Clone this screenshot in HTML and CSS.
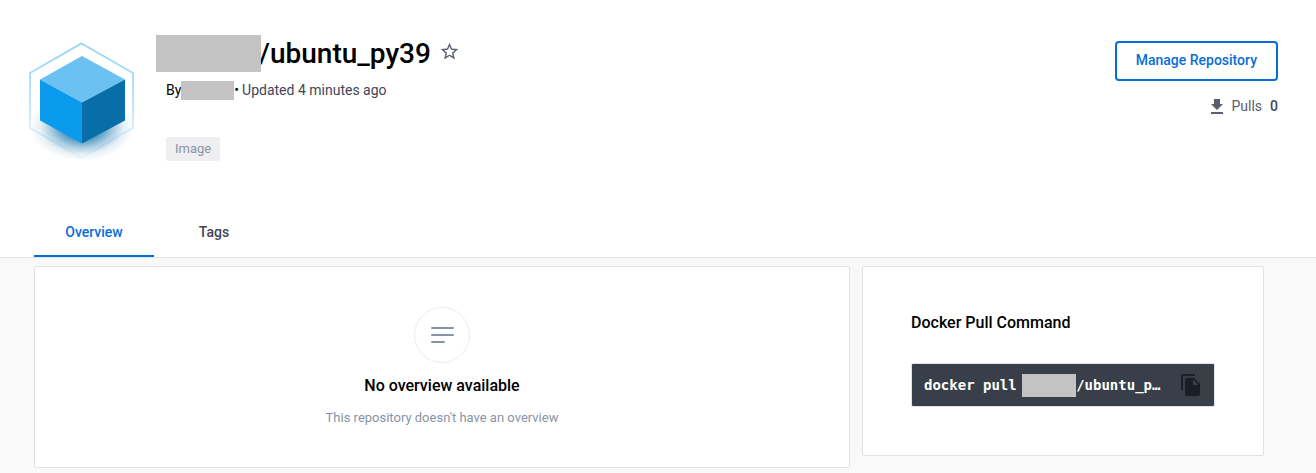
FILE: index.html
```
<!DOCTYPE html>
<html lang="en">
<head>
  <meta charset="UTF-8" />
  <meta name="viewport" content="width=device-width, initial-scale=1.0"/>
  <title>ubuntu_py39 - Repository</title>
  <link rel="stylesheet" href="styles.css">
</head>
<body>
  <header class="repo-header">
    <div class="repo-top">
      <svg class="repo-logo" viewBox="0 0 106 120" aria-hidden="true">
        <defs>
          <linearGradient id="hexStroke" x1="0" y1="0" x2="0" y2="1">
            <stop offset="0" stop-color="#98d5fa"/>
            <stop offset="0.4" stop-color="#b5e0fb"/>
            <stop offset="1" stop-color="#f4fbff"/>
          </linearGradient>
          <radialGradient id="cubeShadow">
            <stop offset="0" stop-color="#086ea8"/>
            <stop offset="0.35" stop-color="#086ea8" stop-opacity="0.75"/>
            <stop offset="0.6" stop-color="#086ea8" stop-opacity="0.35"/>
            <stop offset="0.8" stop-color="#086ea8" stop-opacity="0.1"/>
            <stop offset="1" stop-color="#086ea8" stop-opacity="0"/>
          </radialGradient>
        </defs>
        <path d="M53.500 2.500L105 32V87L53.500 116.500L2 87V32z" fill="none" stroke="url(#hexStroke)" stroke-width="2"/>
        <ellipse cx="54" cy="86" rx="52" ry="34" fill="url(#cubeShadow)"/>
        <path d="M54 15L97 38.500L54 61.500L12 38.500z" fill="#6bc1f2"/>
        <path d="M12 38.500L54 61.500V102.500L12 79.500z" fill="#0a9bec"/>
        <path d="M97 38.500L54 61.500V102.500L97 79.500z" fill="#086ea8"/>
      </svg>

      <div class="repo-info">
        <div class="title-row">
          <span class="redacted redacted-title"></span>
          <h1>/ubuntu_py39</h1>
          <button type="button" class="icon-btn star-btn" aria-label="Star">
            <svg viewBox="0 0 24 24" width="21" height="21"><path fill="#58606e" d="M22 9.240l-7.190-.620L12 2 9.190 8.630 2 9.240l5.460 4.730L5.820 21 12 17.270 18.180 21l-1.630-7.030L22 9.240zM12 15.400l-3.760 2.270 1-4.280-3.320-2.880 4.380-.380L12 6.100l1.710 4.040 4.380.380-3.320 2.880 1 4.280L12 15.400z"/></svg>
          </button>
        </div>
        <p class="meta">
          <span class="by">By</span><span class="redacted redacted-user"></span><span class="by">•</span>
          <span class="updated">Updated 4 minutes ago</span>
        </p>
        <span class="tag">Image</span>
      </div>

      <div class="repo-actions">
        <button type="button" class="manage-btn">Manage Repository</button>
        <div class="pulls">
          <svg viewBox="0 0 12 15" width="12" height="15" aria-hidden="true"><path fill="#58606e" d="M3 0h6v5h3L6 11 0 5h3zM0 13h12v2H0z"/></svg>
          <span>Pulls</span>
          <strong>0</strong>
        </div>
      </div>
    </div>

    <nav class="tabs">
      <a href="#overview" class="tab active">Overview</a>
      <a href="#tags" class="tab">Tags</a>
    </nav>
  </header>

  <main class="content">
    <section class="card overview" id="overview">
      <div class="empty-icon">
        <svg viewBox="0 0 24 18" width="24" height="18" aria-hidden="true"><path stroke="#8993a7" stroke-width="2" stroke-linecap="round" d="M2 2h21M2 9h21M2 16h12"/></svg>
      </div>
      <h2>No overview available</h2>
      <p>This repository doesn't have an overview</p>
    </section>

    <aside class="card pull-card">
      <h2>Docker Pull Command</h2>
      <div class="command">
        <code>docker pull <span class="redacted redacted-code"></span>/ubuntu_p…</code>
        <button type="button" class="icon-btn" aria-label="Copy">
          <svg viewBox="0 0 19 22" width="19" height="22"><path fill="#1b1f25" d="M14 0v2H2v14H0V2Q0 0 2 0zM6 4h7l6 6v10q0 2-2 2H6q-2 0-2-2V6q0-2 2-2zM12 5.500V11h5.500z"/></svg>
        </button>
      </div>
    </aside>
  </main>
</body>
</html>
```

FILE: styles.css
```
* {
  box-sizing: border-box;
  margin: 0;
  padding: 0;
}

body {
  background-color: #f9f9f9;
  color: #000000;
  font-family: Roboto, sans-serif;
  font-size: 14px;
  line-height: 20px;
}

.repo-header {
  background: #ffffff;
  border-bottom: 1px solid #e1e2e6;
}

.repo-top {
  display: flex;
  align-items: flex-start;
  min-height: 208px;
  padding: 35px 38px 0 28px;
}

.repo-logo {
  width: 106px;
  height: 120px;
  margin-top: 6px;
  margin-right: 22px;
  flex-shrink: 0;
}

.repo-info {
  flex: 1;
}

.redacted {
  display: inline-block;
  background: #c3c3c3;
  flex-shrink: 0;
}

.title-row {
  display: flex;
  align-items: center;
}

/* covers the start of the slash */
.redacted-title {
  position: relative;
  width: 105px;
  height: 37px;
  margin-right: -2px;
}

h1 {
  font-size: 28px;
  line-height: 36px;
  font-weight: 500;
}

.icon-btn {
  display: flex;
  border: none;
  background: none;
  cursor: pointer;
}

.star-btn {
  margin-left: 8px;
  margin-bottom: 4px;
}

.meta {
  display: flex;
  align-items: center;
  margin: 8px 0 0 10px;
}

.redacted-user {
  width: 53px;
  height: 19px;
}

.updated {
  margin-left: 3px;
  color: #445;
}

.tag {
  display: inline-block;
  margin: 37px 0 0 10px;
  padding: 0 9px;
  border-radius: 2px;
  background: #efeff2;
  color: #8993a7;
  font-size: 13px;
  line-height: 24px;
}

.repo-actions {
  display: flex;
  flex-direction: column;
  align-items: flex-end;
  gap: 15px;
  padding-top: 6px;
}

.manage-btn {
  height: 40px;
  padding: 0 19px 2px;
  border: 2px solid #086dd7;
  border-radius: 4px;
  background: #ffffff;
  color: #086dd7;
  font-family: inherit;
  font-size: 14px;
  font-weight: 500;
  cursor: pointer;
}

.pulls {
  display: flex;
  align-items: center;
  gap: 8px;
  color: #58606e;
}

.pulls strong {
  color: #445;
  font-weight: 500;
}

.tabs {
  display: flex;
  padding-left: 34px;
}

.tab {
  width: 120px;
  height: 49px;
  border-bottom: 2px solid transparent;
  color: #445;
  font-weight: 500;
  line-height: 48px;
  text-align: center;
  text-decoration: none;
}

.tab.active {
  border-color: #086dd7;
  color: #086dd7;
}

.content {
  display: grid;
  grid-template-columns: minmax(0, 1fr) 402px;
  align-items: start;
  gap: 12px;
  padding: 8px 52px 5px 34px;
}

.card {
  border: 1px solid #e1e2e6;
  border-radius: 2px;
  background: #ffffff;
}

.card h2 {
  font-size: 16px;
  line-height: 24px;
  font-weight: 500;
}

.overview {
  display: flex;
  flex-direction: column;
  align-items: center;
  padding: 40px 20px 39px;
}

.empty-icon {
  display: flex;
  align-items: center;
  justify-content: center;
  width: 56px;
  height: 56px;
  margin-bottom: 11px;
  border: 1px solid #ebecef;
  border-radius: 50%;
}

.overview p {
  margin-top: 10px;
  color: #8993a7;
  font-size: 13px;
}

.pull-card {
  padding: 44px 48px 48px;
}

.command {
  display: flex;
  align-items: center;
  justify-content: space-between;
  height: 44px;
  margin-top: 28px;
  padding: 0 14px 0 12px;
  border: 1px solid #e1e2e6;
  border-radius: 2px;
  background: #393f49;
}

.command code {
  color: #ffffff;
  font-family: "DejaVu Sans Mono", monospace;
  font-size: 14px;
  font-weight: 700;
  line-height: 24px;
  white-space: nowrap;
}

.redacted-code {
  width: 54px;
  height: 23px;
  margin-left: -3px;
  vertical-align: middle;
}

@media (max-width: 900px) {
  .content {
    grid-template-columns: 1fr;
  }
}
```
